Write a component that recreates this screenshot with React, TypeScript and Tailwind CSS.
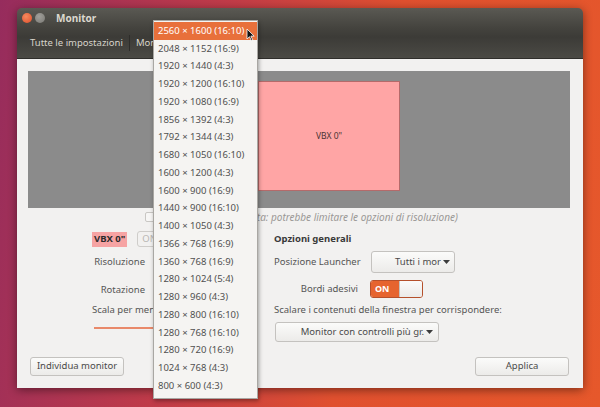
import React from 'react';

const resolutions = [
  '2560 × 1600 (16:10)',
  '2048 × 1152 (16:9)',
  '1920 × 1440 (4:3)',
  '1920 × 1200 (16:10)',
  '1920 × 1080 (16:9)',
  '1856 × 1392 (4:3)',
  '1792 × 1344 (4:3)',
  '1680 × 1050 (16:10)',
  '1600 × 1200 (4:3)',
  '1600 × 900 (16:9)',
  '1440 × 900 (16:10)',
  '1400 × 1050 (4:3)',
  '1366 × 768 (16:9)',
  '1360 × 768 (16:9)',
  '1280 × 1024 (5:4)',
  '1280 × 960 (4:3)',
  '1280 × 800 (16:10)',
  '1280 × 768 (16:10)',
  '1280 × 720 (16:9)',
  '1024 × 768 (4:3)',
  '800 × 600 (4:3)',
];

function Caret() {
  return (
    <svg width="7" height="4" viewBox="0 0 7 4" className="ml-[2px]">
      <path d="M0 0h7L3.5 4z" fill="#3c3c3c" />
    </svg>
  );
}

const btn =
  'border border-[#c4c2bf] rounded-[3px] bg-[linear-gradient(#fbfbfa,#ecebe9)] text-[#4a4a4a]';

export default function App() {
  return (
    <div className="relative w-[600px] h-[407px] overflow-hidden pt-[8px] pl-[17px] font-['Noto_Sans',sans-serif] text-[9.5px] text-[#555] bg-[linear-gradient(100deg,#962c5d_0%,#c23c48_35%,#e0502f_60%,#e6582b_100%)]">
      {/* window */}
      <div className="w-[566px] h-[380px] flex flex-col rounded-t-[5px] overflow-hidden shadow-[0_2px_10px_rgba(0,0,0,0.45)]">
        {/* title bar */}
        <div className="h-[20px] flex items-center pl-[5px] gap-[3px] bg-[linear-gradient(#5a5953,#44433e)]">
          <span className="w-[10px] h-[10px] rounded-full bg-[radial-gradient(circle_at_40%_35%,#f58a5e,#df4d2a)]" />
          <span className="w-[10px] h-[10px] rounded-full bg-[radial-gradient(circle_at_40%_35%,#a09f9a,#7a7974)]" />
          <span className="ml-[8px] font-bold text-[10px] text-[#dcd8cf]">Monitor</span>
        </div>
        {/* toolbar */}
        <div className="h-[30px] flex items-center pl-[13px] bg-[linear-gradient(#44433e,#3c3b37_30%,#4b4a45)] text-[9.5px] text-[#d8d4cb]">
          <span>Tutte le impostazioni</span>
          <span className="mx-[6px] w-px h-[16px] bg-[#2e2d2a]" />
          <span>Monitor</span>
        </div>
        {/* content */}
        <div className="flex-1 flex flex-col bg-[#f2f1f0] px-[11px] pt-[12px] pb-[12px] border-t border-[#2f2e2b]">
          <div className="relative w-[542px] h-[137px] bg-[#8b8b8b]">
            <div className="absolute left-[230px] top-[10px] w-[142px] h-[110px] bg-[#ffa5a5] border border-[#b56a6a] flex items-center justify-center text-[8.5px] text-[#4a3333]">
              VBX 0"
            </div>
          </div>

          <div className="h-[16px] mt-[1px] ml-[117px] flex items-center gap-[8px]">
            <span className="w-[10px] h-[10px] border border-[#c9c7c4] bg-[#f7f6f5] rounded-[2px]" />
            <span className="italic text-[10px] text-[#9a9896] whitespace-nowrap">
              Schermi duplicati (nota: potrebbe limitare le opzioni di risoluzione)
            </span>
          </div>

          <div className="flex mt-[3px]">
            {/* left column */}
            <div className="w-[182px] ml-[64px] flex flex-col">
              <div className="h-[22px] flex items-center gap-[10px]">
                <span className="px-[2px] h-[15px] flex items-center bg-[#f6a3a3] font-bold text-[#2b2b2b]">VBX 0"</span>
                <span className="w-[40px] h-[16px] border border-[#cfcdca] rounded-[3px] pl-[4px] flex items-center text-[#b9b7b4]">ON</span>
              </div>
              <div className="h-[24px] flex items-center">
                <span className="w-[53px] text-right">Risoluzione</span>
              </div>
              <div className="h-[26px] pt-[6px] flex items-center">
                <span className="w-[53px] text-right">Rotazione</span>
              </div>
              <div className="h-[20px] flex items-center">Scala per menu e barre del titolo:</div>
              <div className="mt-[7px] ml-[2px] w-[150px] h-[2px] bg-[#e9896a]" />
            </div>
            {/* right column */}
            <div className="flex flex-col">
              <div className="h-[22px] flex items-center font-bold text-[#3a3a3a]">Opzioni generali</div>
              <div className="h-[24px] flex items-center">
                <span className="w-[97px]">Posizione Launcher</span>
                <span className={`w-[84px] h-[22px] flex items-center justify-end pr-[4px] ${btn}`}>
                  Tutti i mor
                  <Caret />
                </span>
              </div>
              <div className="h-[26px] pt-[4px] flex items-center">
                <span className="w-[96px] pr-[12px] text-right">Bordi adesivi</span>
                <span className="w-[53px] h-[18px] flex border border-[#b5502b] rounded-[3px] overflow-hidden">
                  <span className="w-[28px] bg-[#e6642f] text-white font-bold flex items-center pl-[4px] text-[9px]">ON</span>
                  <span className="flex-1 bg-[linear-gradient(#fbfbfa,#ebeae8)] border-l border-[#c4c2bf]" />
                </span>
              </div>
              <div className="h-[20px] flex items-center">Scalare i contenuti della finestra per corrispondere:</div>
              <span className={`mt-[2px] ml-[1px] w-[164px] h-[20px] flex items-center justify-end pr-[5px] ${btn}`}>
                Monitor con controlli più gr.
                <Caret />
              </span>
            </div>
          </div>

          <div className="mt-auto ml-[2px] w-[539px] flex justify-between">
            <span className={`w-[94px] h-[19px] flex items-center justify-center ${btn}`}>Individua monitor</span>
            <span className={`w-[94px] h-[19px] flex items-center justify-center ${btn}`}>Applica</span>
          </div>
        </div>
      </div>

      {/* open resolution menu */}
      <div className="absolute left-[153px] top-[20px] w-[105px] pt-[1px] pb-[3px] bg-[#f5f4f2] border border-[#a9a7a3] shadow-[1px_2px_4px_rgba(0,0,0,0.35)]">
        {resolutions.map((r, i) => (
          <div
            key={r}
            className={
              i === 0
                ? 'h-[17.75px] flex items-center pl-[4px] bg-[#e8703b] text-white'
                : 'h-[17.75px] flex items-center pl-[4px] text-[#505050]'
            }
          >
            {r}
          </div>
        ))}
      </div>

      {/* mouse pointer */}
      <svg className="absolute left-[246px] top-[28px]" width="9" height="13" viewBox="0 0 9 13">
        <path d="M1 1v10l2.5-2.3 1.8 3.8 1.4-.7-1.8-3.7H8.2z" fill="#111" stroke="#fff" strokeWidth="0.8" />
      </svg>
    </div>
  );
}
